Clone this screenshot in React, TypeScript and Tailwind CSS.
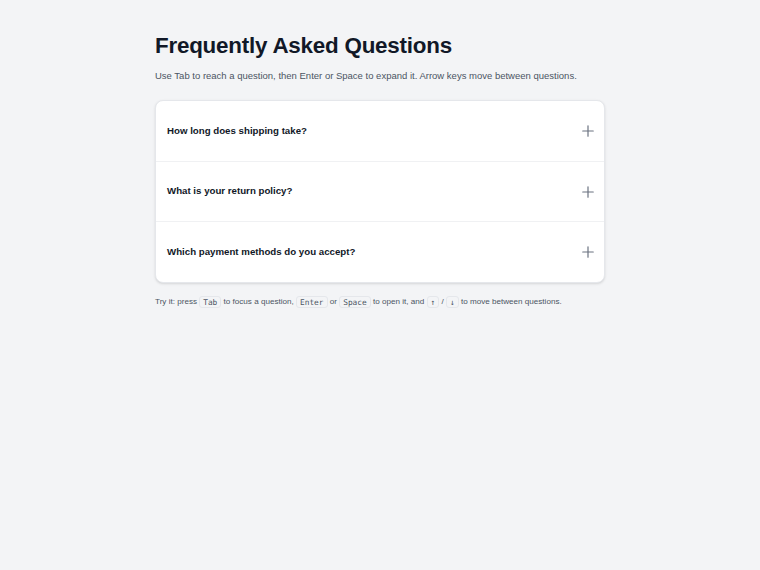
import { useState } from "react"

const FAQS = [
  { q: "How long does shipping take?", a: "Most orders arrive within 3–5 business days." },
  { q: "What is your return policy?", a: "You can return any item within 30 days of delivery." },
  { q: "Which payment methods do you accept?", a: "We accept all major credit cards and PayPal." },
]

function PlusIcon() {
  return (
    <svg width="12" height="12" viewBox="0 0 12 12" fill="none" stroke="#6b7280" strokeWidth="1.2" strokeLinecap="round">
      <path d="M6 0.75v10.5M0.75 6h10.5" />
    </svg>
  )
}

function Kbd({ children }: { children: React.ReactNode }) {
  return (
    <kbd className="rounded-[3px] border border-[#e5e7eb] bg-[#f3f4f6] px-[3px] py-[0.5px] font-['DejaVu_Sans_Mono',monospace] text-[7.8px] text-[#4b5563]">
      {children}
    </kbd>
  )
}

export default function App() {
  const [open, setOpen] = useState<number | null>(null)

  return (
    <div className="min-h-[570px] bg-[#f3f4f6] font-['Liberation_Sans',Arial,sans-serif]">
      <div className="mx-auto w-[450px] pt-[32px]">
        <h1 className="text-[22.4px] font-bold leading-[28px] tracking-[-0.01em] text-[#111827]">
          Frequently Asked Questions
        </h1>
        <p className="mt-[9px] text-[9.5px] leading-[14px] text-[#4b5563]">
          Use Tab to reach a question, then Enter or Space to expand it. Arrow keys move between questions.
        </p>

        <div className="mt-[17px] overflow-hidden rounded-[8px] border border-[#e5e7eb] bg-white shadow-sm">
          {FAQS.map((item, i) => (
            <div key={item.q} className={i > 0 ? "border-t border-[#f0f1f3]" : ""}>
              <button
                onClick={() => setOpen(open === i ? null : i)}
                className="flex h-[59.7px] w-full items-center justify-between pl-[11px] pr-[10px] text-left"
              >
                <span className="text-[9.7px] font-bold text-[#111827]">{item.q}</span>
                <PlusIcon />
              </button>
              {open === i && <div className="px-[11px] pb-[16px] text-[9.7px] text-[#4b5563]">{item.a}</div>}
            </div>
          ))}
        </div>

        <p className="mt-[12px] text-[8.1px] leading-[14px] text-[#4b5563]">
          Try it: press <Kbd>Tab</Kbd> to focus a question, <Kbd>Enter</Kbd> or <Kbd>Space</Kbd> to open it, and{" "}
          <Kbd>↑</Kbd> / <Kbd>↓</Kbd> to move between questions.
        </p>
      </div>
    </div>
  )
}
